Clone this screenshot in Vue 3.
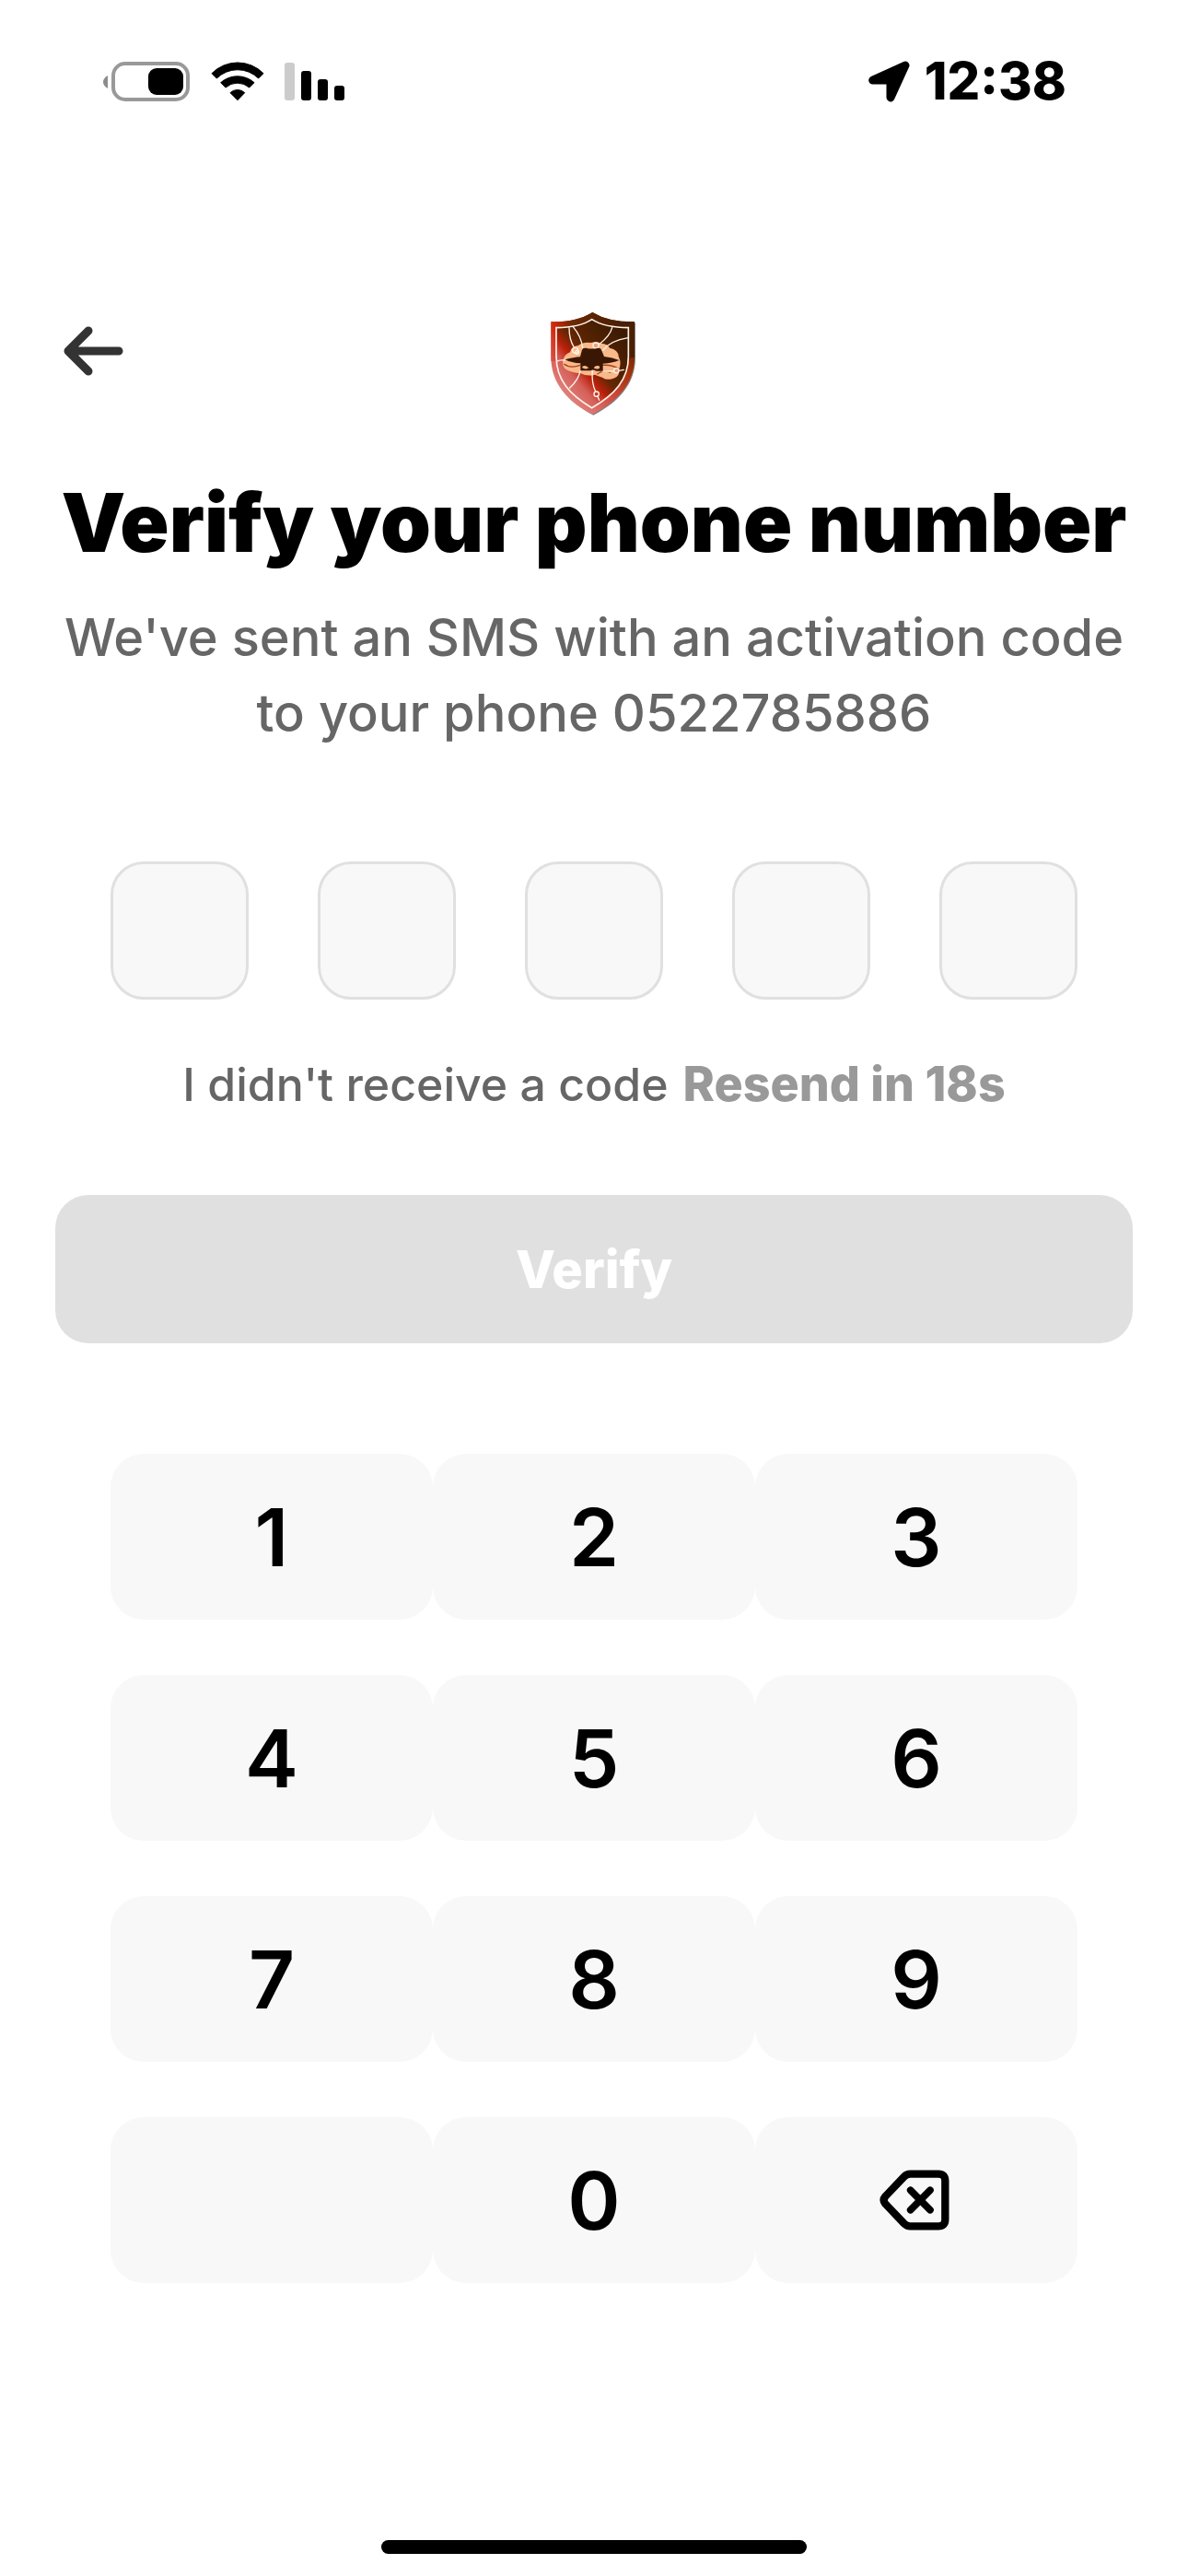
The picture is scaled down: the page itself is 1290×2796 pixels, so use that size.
<template>
    <div class="screen">
        <div class="status-bar">
            <div class="status-group">
                <svg class="battery" viewBox="0 0 95 43" aria-hidden="true">
                    <path d="M5 15 Q0 18 0 22 Q0 26 5 29 Z" fill="#8c8c8c" />
                    <rect x="11" y="2" width="81" height="39" rx="13" fill="none" stroke="#999" stroke-width="4" />
                    <rect x="49" y="7" width="38" height="29" rx="9" />
                </svg>
                <svg class="wifi" viewBox="416 74 174 129" aria-hidden="true">
                    <g stroke="#000" stroke-width="3" stroke-linejoin="round">
                        <path d="M419 112 A118 118 0 0 1 587 112 L571 128 A97 97 0 0 0 435 128 Z" />
                        <path d="M448 142 A82 82 0 0 1 557 142 L541 158 A58 58 0 0 0 464 158 Z" />
                        <path d="M479 175 A34 34 0 0 1 526 175 L503 199 Z" />
                    </g>
                </svg>
                <svg class="signal" viewBox="0 0 65 41" aria-hidden="true">
                    <rect width="11" height="41" rx="3" fill="#ccc" />
                    <rect x="18" y="9" width="11" height="32" rx="3" />
                    <rect x="36" y="18" width="11" height="23" rx="3" />
                    <rect x="54" y="25" width="11" height="16" rx="3" />
                </svg>
            </div>
            <div class="status-group time">
                <svg class="location" viewBox="127 77 135 135" aria-hidden="true">
                    <path
                        d="M141 140 L247 92 L199 197 V140 Z"
                        stroke="#000"
                        stroke-width="27"
                        stroke-linejoin="round"
                    />
                </svg>
                <span>12:38</span>
            </div>
        </div>

        <header class="header">
            <button class="back" type="button" aria-label="Back">
                <svg viewBox="0 0 66 56" aria-hidden="true">
                    <path
                        d="M28 6 L6 28 L28 50 M6 28 H61"
                        fill="none"
                        stroke="#333"
                        stroke-width="9"
                        stroke-linecap="round"
                        stroke-linejoin="round"
                    />
                </svg>
            </button>
            <svg class="logo" viewBox="0 0 390 405" aria-hidden="true">
                <defs>
                    <linearGradient id="shield" x1="80" y1="290" x2="290" y2="110" gradientUnits="userSpaceOnUse">
                        <stop offset="0" stop-color="#e2807c" />
                        <stop offset="0.22" stop-color="#d5605a" />
                        <stop offset="0.36" stop-color="#bb200a" />
                        <stop offset="0.5" stop-color="#642603" />
                        <stop offset="0.75" stop-color="#4d2002" />
                        <stop offset="1" stop-color="#3d1a04" />
                    </linearGradient>
                    <linearGradient id="rim" x1="60" y1="230" x2="300" y2="130" gradientUnits="userSpaceOnUse">
                        <stop offset="0" stop-color="#d85a52" />
                        <stop offset="0.25" stop-color="#cc2608" />
                        <stop offset="0.45" stop-color="#6b2a04" />
                        <stop offset="1" stop-color="#4a1f02" />
                    </linearGradient>
                    <linearGradient id="edge" x1="120" y1="330" x2="330" y2="120" gradientUnits="userSpaceOnUse">
                        <stop offset="0" stop-color="#e2807c" />
                        <stop offset="0.35" stop-color="#d04a40" />
                        <stop offset="0.65" stop-color="#a8330a" />
                        <stop offset="1" stop-color="#4a1f02" />
                    </linearGradient>
                </defs>
                <path d="M194 45 Q245 78 330 76 V190 C330 275 275 335 193 377 C112 335 58 275 58 190 V76 Q145 78 194 45 Z" fill="#5a5350" opacity="0.75" />
                <path d="M190 42 Q242 74 327 73 V188 C327 272 272 332 190 374 C108 332 55 272 55 188 V73 Q140 74 190 42 Z" fill="url(#edge)" />
                <path d="M190 42 Q242 74 327 73 V188 L190 210 L55 200 V73 Q140 74 190 42 Z" fill="url(#rim)" />
                <path
                    d="M188 65 Q230 92 307 92 V186 C307 262 262 310 188 353 C116 310 72 262 72 186 V92 Q148 92 188 65 Z"
                    fill="url(#shield)"
                    stroke="#fff3e8"
                    stroke-width="5"
                />
                <g fill="#f9b98a">
                    <path d="M95 195 Q100 178 117 172 Q120 152 144 150 Q160 138 184 141 Q205 136 218 143 Q240 144 246 158 Q274 164 275 185 Q286 208 276 228 Q280 248 262 256 Q238 266 222 254 Q204 248 198 245 Q174 252 150 240 Q126 240 104 228 Q88 216 95 195 Z" />
                </g>
                <path d="M97 210 Q118 226 150 214 M222 214 Q258 212 278 228 M205 244 Q222 228 250 238" fill="none" stroke="#a8431c" stroke-width="4" />
                <g fill="none" stroke="#fff3e8" stroke-width="4" stroke-linecap="round">
                    <path d="M114 92 Q114 130 130 156" />
                    <path d="M126 88 Q154 120 158 158" />
                    <path d="M254 92 Q248 118 212 146" />
                    <path d="M306 125 Q248 134 224 166" />
                    <path d="M74 202 Q82 196 100 198" />
                    <path d="M116 288 Q146 260 150 232" />
                    <path d="M190 230 Q186 270 200 300 M206 314 L212 328" />
                    <path d="M222 234 H260 M276 232 L292 229" />
                    <circle cx="134" cy="166" r="9" />
                    <circle cx="140" cy="172" r="6" />
                    <circle cx="201" cy="150" r="9" fill="#eea27a" />
                    <circle cx="268" cy="232" r="8" fill="#eea27a" />
                    <circle cx="203" cy="308" r="8" />
                </g>
                <path d="M101 196 Q130 188 150 187 L156 164 Q158 157 168 158 Q190 163 208 158 Q217 157 219 164 L228 186 Q256 189 277 198 Q254 208 224 209 V233 H202 Q192 226 184 232 H151 V208 Q122 207 101 196 Z" fill="#3a1705" />
                <path d="M156 222 Q158 213 169 217 L178 223 Q168 230 156 222 Z M194 223 Q200 213 212 217 Q216 224 210 226 Q202 228 194 223 Z" fill="#f9b98a" />
            </svg>
        </header>

        <main class="content">
            <h1>Verify your phone number</h1>
            <p class="subtitle">We've sent an SMS with an activation code to your phone 0522785886</p>

            <div class="code-row">
                <input
                    v-for="(digit, idx) in slots"
                    :key="idx"
                    :value="digit"
                    :aria-label="`Digit ${idx + 1}`"
                    class="code-box"
                    type="text"
                    inputmode="none"
                    maxlength="1"
                    readonly
                />
            </div>

            <div class="resend-row">
                <span>I didn't receive a code</span>
                <button class="resend" type="button" disabled>Resend in {{ seconds }}s</button>
            </div>

            <button class="verify" type="button" :disabled="code.length < CODE_LENGTH">Verify</button>

            <div class="keypad">
                <button v-for="n in 9" :key="n" class="key" type="button" @click="press(n)">{{ n }}</button>
                <div class="key"></div>
                <button class="key" type="button" @click="press(0)">0</button>
                <button class="key" type="button" aria-label="Delete" @click="erase">
                    <svg class="delete" viewBox="524 254 240 198" aria-hidden="true">
                        <g fill="none" stroke="#000" stroke-linejoin="round" stroke-linecap="round">
                            <path
                                d="M624 268 H716 Q738 268 738 290 V416 Q738 438 716 438 H624 Q613 438 604 429 L543 365 Q533 353 543 341 L604 277 Q613 268 624 268 Z"
                                stroke-width="25"
                            />
                            <path d="M625 321 L689 385 M689 321 L625 385" stroke-width="23" />
                        </g>
                    </svg>
                </button>
            </div>
        </main>

        <div class="home-indicator"></div>
    </div>
</template>

<script setup>
import { computed, ref } from 'vue';

const CODE_LENGTH = 5;

const code = ref('');
const seconds = ref(18);

const slots = computed(() => Array.from({ length: CODE_LENGTH }, (_, i) => code.value[i] ?? ''));

const press = (n) => {
    if (code.value.length < CODE_LENGTH) code.value += n;
};

const erase = () => {
    code.value = code.value.slice(0, -1);
};
</script>

<style>
body {
    margin: 0;
    background: #fff;
}
</style>

<style scoped>
.screen {
    display: flex;
    flex-direction: column;
    box-sizing: border-box;
    min-height: 100vh;
    padding-bottom: 24px;
    background: #fff;
    color: #000;
    font-family: Inter, "Liberation Sans", sans-serif;
}

button,
input {
    margin: 0;
    padding: 0;
    border: none;
    color: inherit;
    font-family: inherit;
}

svg {
    display: block;
}

.status-bar {
    display: flex;
    justify-content: space-between;
    align-items: center;
    height: 64px;
    padding: 56px 132px 0 112px;
}

.status-group {
    display: flex;
    align-items: center;
}

.battery {
    width: 95px;
    height: 43px;
}

.wifi {
    width: 58px;
    height: 43px;
    margin: 0 22px;
}

.signal {
    width: 65px;
    height: 41px;
}

.time {
    gap: 16px;
    font-size: 56px;
    font-weight: 800;
    line-height: 64px;
}

.location {
    width: 45px;
    height: 45px;
}

.header {
    display: grid;
    grid-template-columns: 1fr auto 1fr;
    align-items: start;
    padding: 205px 60px 0;
}

.back {
    justify-self: start;
    padding: 28px 8px;
    background: none;
}

.back svg {
    width: 66px;
    height: 56px;
}

.logo {
    width: 130px;
    height: 135px;
}

.content {
    padding: 53px 60px 0;
}

h1 {
    margin: 0;
    font-size: 88px;
    font-weight: 900;
    line-height: 108px;
    text-align: center;
}

.subtitle {
    margin: 30px 0 0;
    color: #666;
    font-size: 56px;
    font-weight: 500;
    line-height: 82px;
    text-align: center;
}

.code-row {
    display: flex;
    justify-content: space-between;
    margin: 120px 60px 0;
}

.code-box {
    box-sizing: border-box;
    width: 150px;
    height: 150px;
    border: 3px solid #e0e0e0;
    border-radius: 36px;
    background: #f8f8f8;
    font-size: 56px;
    text-align: center;
}

.resend-row {
    display: flex;
    justify-content: center;
    align-items: center;
    gap: 16px;
    margin-top: 60px;
    color: #666;
    font-size: 50px;
    font-weight: 500;
    line-height: 64px;
}

.resend {
    background: none;
    color: #999;
    font-size: 52px;
    font-weight: 800;
    line-height: 64px;
}

.verify {
    display: block;
    width: 100%;
    height: 161px;
    margin-top: 88px;
    border-radius: 36px;
    background: #e0e0e0;
    color: #fff;
    font-size: 56px;
    font-weight: 800;
}

.keypad {
    display: grid;
    grid-template-columns: repeat(3, 1fr);
    row-gap: 60px;
    margin: 120px 60px 0;
}

.key {
    display: flex;
    justify-content: center;
    align-items: center;
    height: 180px;
    border-radius: 36px;
    background: #f8f8f8;
    font-size: 87px;
    font-weight: 600;
}

.delete {
    width: 80px;
    height: 66px;
}

.home-indicator {
    width: 462px;
    height: 15px;
    margin: auto auto 0;
    border-radius: 8px;
    background: #000;
}
</style>
